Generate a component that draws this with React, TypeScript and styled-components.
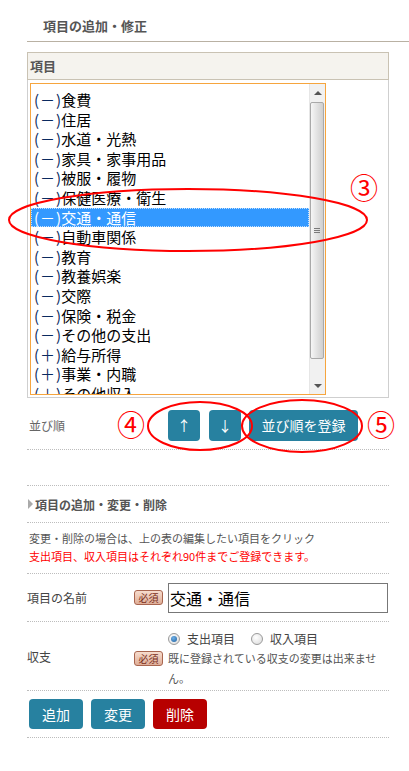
import React from 'react';
import styled, { createGlobalStyle } from 'styled-components';

const Global = createGlobalStyle`
  html, body { margin: 0; padding: 0; background: #fff; }
  body { font-family: "Noto Sans CJK JP", "Noto Sans", sans-serif; color: #333; }
  * { box-sizing: border-box; }
`;

const Page = styled.div`
  position: relative;
  width: 409px;
  min-height: 771px;
  padding-left: 27px;
`;

const TitleBar = styled.h2`
  margin: 0;
  height: 42px;
  padding: 17px 0 0 16px;
  font-size: 13px;
  font-weight: bold;
  line-height: 18px;
  color: #555;
  border-bottom: 1px solid #b9b1a3;
`;

const Content = styled.div`
  width: 362px;
`;

const Table = styled.div`
  margin-top: 10px;
`;

const TableHead = styled.div`
  height: 28px;
  background: #f5f3ee;
  border: 1px solid #c9c2b3;
  padding-left: 2px;
  font-size: 13px;
  font-weight: bold;
  line-height: 26px;
  color: #555;
`;

const TableBody = styled.div`
  border: 1px solid #cfcfcf;
  border-top: none;
  padding: 3px 2px 2px 2px;
`;

const ListBox = styled.div`
  display: flex;
  width: 296px;
  height: 312px;
  border: 1px solid #f6a53e;
  background: #fff;
  overflow: hidden;
`;

const Options = styled.ul`
  flex: 1;
  margin: 0;
  padding: 6px 0 0 0;
  list-style: none;
  overflow: hidden;
`;

const Option = styled.li<{ $selected?: boolean }>`
  height: 19.6px;
  line-height: 19.6px;
  padding-left: 3px;
  font-size: 15px;
  white-space: nowrap;
  color: ${(p) => (p.$selected ? '#fff' : '#000')};
  background: ${(p) => (p.$selected ? '#3399ff' : 'transparent')};
  outline: ${(p) => (p.$selected ? '1px dotted rgba(255,255,255,0.7)' : 'none')};
  outline-offset: -1px;
`;

const Sign = styled.span<{ $selected?: boolean }>`
  color: ${(p) => (p.$selected ? '#fff' : '#0a2a60')};
`;

const SignMark = styled.span`
  padding: 0 1px;
`;

const ScrollBar = styled.div`
  width: 16px;
  display: flex;
  flex-direction: column;
  background: #f1f1f1;
  border-left: 1px solid #e6e6e6;
`;

const ScrollBtn = styled.div`
  height: 17px;
  display: flex;
  align-items: center;
  justify-content: center;
`;

const Tri = styled.span<{ $down?: boolean }>`
  width: 0;
  height: 0;
  border-left: 4px solid transparent;
  border-right: 4px solid transparent;
  ${(p) => (p.$down ? 'border-top: 4px solid #555;' : 'border-bottom: 4px solid #555;')}
`;

const Track = styled.div`
  flex: 1;
  padding-top: 1px;
`;

const Thumb = styled.div`
  height: 257px;
  margin: 0 1px 0 0;
  border: 1px solid #a9a9a9;
  border-radius: 2px;
  background: linear-gradient(to right, #f6f6f6, #e4e4e4 45%, #cfcfcf);
  display: flex;
  flex-direction: column;
  align-items: center;
  justify-content: center;
  gap: 1px;
`;

const Grip = styled.span`
  width: 6px;
  height: 1px;
  background: #7a7a7a;
`;

const SortRow = styled.div`
  display: flex;
  align-items: flex-start;
  height: 52px;
  padding-top: 12px;
  border-bottom: 1px dotted #bdbdbd;
`;

const SortLabel = styled.div`
  width: 141px;
  padding-left: 2px;
  font-size: 12px;
  line-height: 31px;
  color: #666;
`;

const Btn = styled.button<{ $w: number; $h: number; $bg?: string; $mr?: number }>`
  width: ${(p) => p.$w}px;
  height: ${(p) => p.$h}px;
  margin: 0 ${(p) => p.$mr ?? 0}px 0 0;
  padding: 0;
  border: none;
  border-radius: 4px;
  background: ${(p) => p.$bg ?? '#2781a0'};
  color: #fff;
  font-family: "Noto Sans CJK JP", sans-serif;
  font-size: 14px;
  line-height: ${(p) => p.$h}px;
  cursor: pointer;
`;

const Spacer = styled.div`
  height: 36px;
  border-bottom: 1px dotted #bdbdbd;
`;

const SectionTitle = styled.h3`
  margin: 0;
  height: 37px;
  display: flex;
  align-items: center;
  gap: 2px;
  padding-left: 1px;
  font-size: 12px;
  font-weight: bold;
  color: #555;
  border-bottom: 1px dotted #bdbdbd;
`;

const Arrow = styled.span`
  width: 0;
  height: 0;
  border-top: 5px solid transparent;
  border-bottom: 5px solid transparent;
  border-left: 5px solid #aaa;
`;

const Notice = styled.div`
  height: 51px;
  padding: 6px 0 0 2px;
  font-size: 11px;
  line-height: 18px;
  color: #555;
  border-bottom: 1px dotted #bdbdbd;
`;

const Warn = styled.div`
  color: #f00;
`;

const FormRow = styled.div<{ $h: number; $align?: string }>`
  display: flex;
  align-items: ${(p) => p.$align ?? 'center'};
  height: ${(p) => p.$h}px;
  border-bottom: 1px dotted #bdbdbd;
`;

const FieldLabel = styled.div`
  width: 107px;
  font-size: 12px;
  color: #444;
`;

const FieldBody = styled.div`
  flex: 1;
  display: flex;
  flex-direction: column;
`;

const Inline = styled.div<{ $top?: boolean }>`
  display: flex;
  align-items: ${(p) => (p.$top ? 'flex-start' : 'center')};
`;

const Badge = styled.span<{ $mt?: number }>`
  flex: none;
  width: 29px;
  height: 15px;
  margin: ${(p) => p.$mt ?? 0}px 5px 0 0;
  border: 1px solid #a8654f;
  border-radius: 3px;
  background: linear-gradient(#f7dccd, #dfae98);
  color: #7a2e1c;
  font-size: 10px;
  line-height: 13px;
  text-align: center;
`;

const TextInput = styled.input`
  width: 220px;
  height: 30px;
  border: 1px solid #777;
  padding: 0 1px;
  font-family: "Noto Sans CJK JP", sans-serif;
  font-size: 16px;
  color: #000;
  outline: none;
`;

const RadioLine = styled.div`
  display: flex;
  align-items: center;
  padding: 5px 0 0 34px;
  height: 23px;
  font-size: 12px;
  color: #444;
`;

const RadioOpt = styled.label`
  display: flex;
  align-items: center;
  gap: 7px;
  margin-right: 16px;
  line-height: 18px;
`;

const RadioDot = styled.span<{ $on?: boolean }>`
  width: 12px;
  height: 12px;
  border-radius: 50%;
  border: 1px solid #9a9a9a;
  background: radial-gradient(circle at 40% 35%, #fff, #d9d9d9);
  display: flex;
  align-items: center;
  justify-content: center;
  &::after {
    content: '';
    display: ${(p) => (p.$on ? 'block' : 'none')};
    width: 6px;
    height: 6px;
    border-radius: 50%;
    background: radial-gradient(circle at 40% 35%, #6fb0e8, #1e5f9c);
  }
`;

const Note = styled.div`
  width: 212px;
  font-size: 11px;
  line-height: 20px;
  color: #555;
`;

const ActionRow = styled.div`
  display: flex;
  gap: 8px;
  height: 47px;
  padding: 8px 0 0 2px;
  border-bottom: 1px dotted #bdbdbd;
`;

const Overlay = styled.svg`
  position: absolute;
  left: 0;
  top: 0;
  pointer-events: none;
`;

const items: [string, string][] = [
  ['－', '食費'],
  ['－', '住居'],
  ['－', '水道・光熱'],
  ['－', '家具・家事用品'],
  ['－', '被服・履物'],
  ['－', '保健医療・衛生'],
  ['－', '交通・通信'],
  ['－', '自動車関係'],
  ['－', '教育'],
  ['－', '教養娯楽'],
  ['－', '交際'],
  ['－', '保険・税金'],
  ['－', 'その他の支出'],
  ['＋', '給与所得'],
  ['＋', '事業・内職'],
  ['＋', 'その他収入'],
];

export default function App() {
  return (
    <>
      <Global />
      <Page>
        <TitleBar>項目の追加・修正</TitleBar>
        <Content>
          <Table>
            <TableHead>項目</TableHead>
            <TableBody>
              <ListBox>
                <Options>
                  {items.map(([s, t], i) => (
                    <Option key={i} $selected={i === 6}>
                      <Sign $selected={i === 6}>
                        (<SignMark>{s}</SignMark>)
                      </Sign>
                      {t}
                    </Option>
                  ))}
                </Options>
                <ScrollBar>
                  <ScrollBtn>
                    <Tri />
                  </ScrollBtn>
                  <Track>
                    <Thumb>
                      <Grip />
                      <Grip />
                      <Grip />
                    </Thumb>
                  </Track>
                  <ScrollBtn>
                    <Tri $down />
                  </ScrollBtn>
                </ScrollBar>
              </ListBox>
            </TableBody>
          </Table>

          <SortRow>
            <SortLabel>並び順</SortLabel>
            <Btn $w={32} $h={31} $mr={9}>↑</Btn>
            <Btn $w={32} $h={31} $mr={8}>↓</Btn>
            <Btn $w={109} $h={31}>並び順を登録</Btn>
          </SortRow>
          <Spacer />

          <SectionTitle>
            <Arrow />
            項目の追加・変更・削除
          </SectionTitle>

          <Notice>
            <div>変更・削除の場合は、上の表の編集したい項目をクリック</div>
            <Warn>支出項目、収入項目はそれぞれ90件までご登録できます。</Warn>
          </Notice>

          <FormRow $h={48}>
            <FieldLabel>項目の名前</FieldLabel>
            <Inline>
              <Badge>必須</Badge>
              <TextInput defaultValue="交通・通信" />
            </Inline>
          </FormRow>

          <FormRow $h={69}>
            <FieldLabel>収支</FieldLabel>
            <FieldBody>
              <RadioLine>
                <RadioOpt>
                  <RadioDot $on />
                  支出項目
                </RadioOpt>
                <RadioOpt>
                  <RadioDot />
                  収入項目
                </RadioOpt>
              </RadioLine>
              <Inline $top>
                <Badge $mt={3}>必須</Badge>
                <Note>既に登録されている収支の変更は出来ません。</Note>
              </Inline>
            </FieldBody>
          </FormRow>

          <ActionRow>
            <Btn $w={54} $h={30}>追加</Btn>
            <Btn $w={54} $h={30}>変更</Btn>
            <Btn $w={54} $h={30} $bg="#b70000">削除</Btn>
          </ActionRow>
        </Content>

        <Overlay width={409} height={771} viewBox="0 0 409 771">
          <g fill="none" stroke="#f00" strokeWidth={2}>
            <ellipse cx={188} cy={220} rx={179} ry={31} />
            <ellipse cx={200} cy={426} rx={52} ry={24} />
            <ellipse cx={302} cy={426} rx={60} ry={26} />
          </g>
          <g fill="#f00" fontFamily='"Noto Sans CJK JP", sans-serif' fontSize={28} textAnchor="middle">
            <text x={364} y={199}>③</text>
            <text x={131} y={436}>④</text>
            <text x={381} y={436}>⑤</text>
          </g>
        </Overlay>
      </Page>
    </>
  );
}
